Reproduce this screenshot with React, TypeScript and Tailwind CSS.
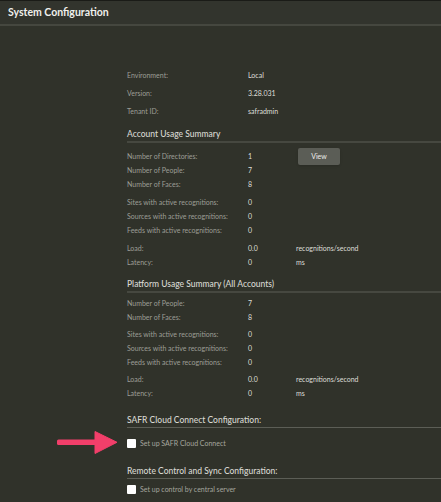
import React from 'react';

type Row = { label: string; value: string; unit?: string; view?: boolean };

const font = { fontFamily: 'Lato, "Open Sans", sans-serif' };

const InfoRow = ({ label, value, unit, view }: Row) => (
    <div className="flex items-center h-[14px] text-[7px]">
        <div className="w-[121px] text-[#9d9e96]">{label}</div>
        <div className="w-[48px] text-[#deded8]">{value}</div>
        {unit && <div className="text-[#deded8]">{unit}</div>}
        {view && (
            <button className="ml-[2px] h-[17px] w-[42px] rounded-[2px] bg-[#5b5d56] text-[7px] text-[#ececea] shadow-sm">
                View
            </button>
        )}
    </div>
);

const SectionHeading = ({ title, thick, className }: { title: string; thick?: boolean; className: string }) => (
    <div
        className={`flex items-center text-[8.5px] text-[#d8d8d2] font-medium ${
            thick ? 'border-b-2 border-[#464840]' : 'border-b border-[#5c5e56]'
        } ${className}`}
    >
        {title}
    </div>
);

const Check = ({ label, className }: { label: string; className: string }) => (
    <label className={`flex items-center h-[14px] gap-[4px] ${className}`}>
        <span className="w-[9px] h-[9px] rounded-[1px] bg-white"></span>
        <span className="text-[7px] text-[#a5a69e]">{label}</span>
    </label>
);

const App = () => {
    const account = {
        counts: [
            { label: 'Number of Directories:', value: '1', view: true },
            { label: 'Number of People:', value: '7' },
            { label: 'Number of Faces:', value: '8' },
        ],
        active: [
            { label: 'Sites with active recognitions:', value: '0' },
            { label: 'Sources with active recognitions:', value: '0' },
            { label: 'Feeds with active recognitions:', value: '0' },
        ],
        perf: [
            { label: 'Load:', value: '0.0', unit: 'recognitions/second' },
            { label: 'Latency:', value: '0', unit: 'ms' },
        ],
    };

    return (
        <div className="relative w-[441px] h-[502px] overflow-hidden bg-[#30322a]" style={font}>
            {/* Title bar */}
            <div className="h-[26px] flex items-center px-[8px] bg-[#32342d] border-t border-[#1a1b17] border-b-2 border-b-[#45473f]">
                <h1 className="text-[10.5px] font-bold text-[#f0f0ec]">System Configuration</h1>
            </div>

            <div className="pl-[127px] pt-[40px]">
                {/* General */}
                <div className="text-[7px]">
                    {[
                        ['Environment:', 'Local'],
                        ['Version:', '3.28.031'],
                        ['Tenant ID:', 'safradmin'],
                    ].map(([l, v]) => (
                        <div key={l} className="flex items-center h-[18px]">
                            <div className="w-[121px] text-[#9d9e96]">{l}</div>
                            <div className="text-[#deded8]">{v}</div>
                        </div>
                    ))}
                </div>

                <SectionHeading title="Account Usage Summary" thick className="mt-[8px] h-[15px]" />
                <div className="mt-[6px]">
                    {account.counts.map((r) => (
                        <InfoRow key={r.label} {...r} />
                    ))}
                </div>
                <div className="mt-[4px]">
                    {account.active.map((r) => (
                        <InfoRow key={r.label} {...r} />
                    ))}
                </div>
                <div className="mt-[4px]">
                    {account.perf.map((r) => (
                        <InfoRow key={r.label} {...r} />
                    ))}
                </div>

                <SectionHeading title="Platform Usage Summary (All Accounts)" thick className="mt-[9px] h-[15px]" />
                <div className="mt-[3px]">
                    <InfoRow label="Number of People:" value="7" />
                    <InfoRow label="Number of Faces:" value="8" />
                </div>
                <div className="mt-[3px]">
                    {account.active.map((r) => (
                        <InfoRow key={r.label} {...r} />
                    ))}
                </div>
                <div className="mt-[3px]">
                    {account.perf.map((r) => (
                        <InfoRow key={r.label} {...r} />
                    ))}
                </div>

                <SectionHeading title="SAFR Cloud Connect Configuration:" className="mt-[13px] h-[15px]" />
                <Check label="Set up SAFR Cloud Connect" className="mt-[8px]" />

                <SectionHeading title="Remote Control and Sync Configuration:" className="mt-[15px] h-[14px]" />
                <Check label="Set up control by central server" className="mt-[3px]" />
            </div>

            {/* Annotation arrow */}
            <svg className="absolute left-[57px] top-[431px]" width="61" height="23" viewBox="0 0 61 23">
                <rect x="0" y="8.5" width="42" height="5.5" rx="1.5" fill="#f23f6a" />
                <polygon points="38,0.5 60,11.3 38,22.5" fill="#f23f6a" strokeLinejoin="round" stroke="#f23f6a" strokeWidth="1" />
            </svg>
        </div>
    );
};

export default App;
